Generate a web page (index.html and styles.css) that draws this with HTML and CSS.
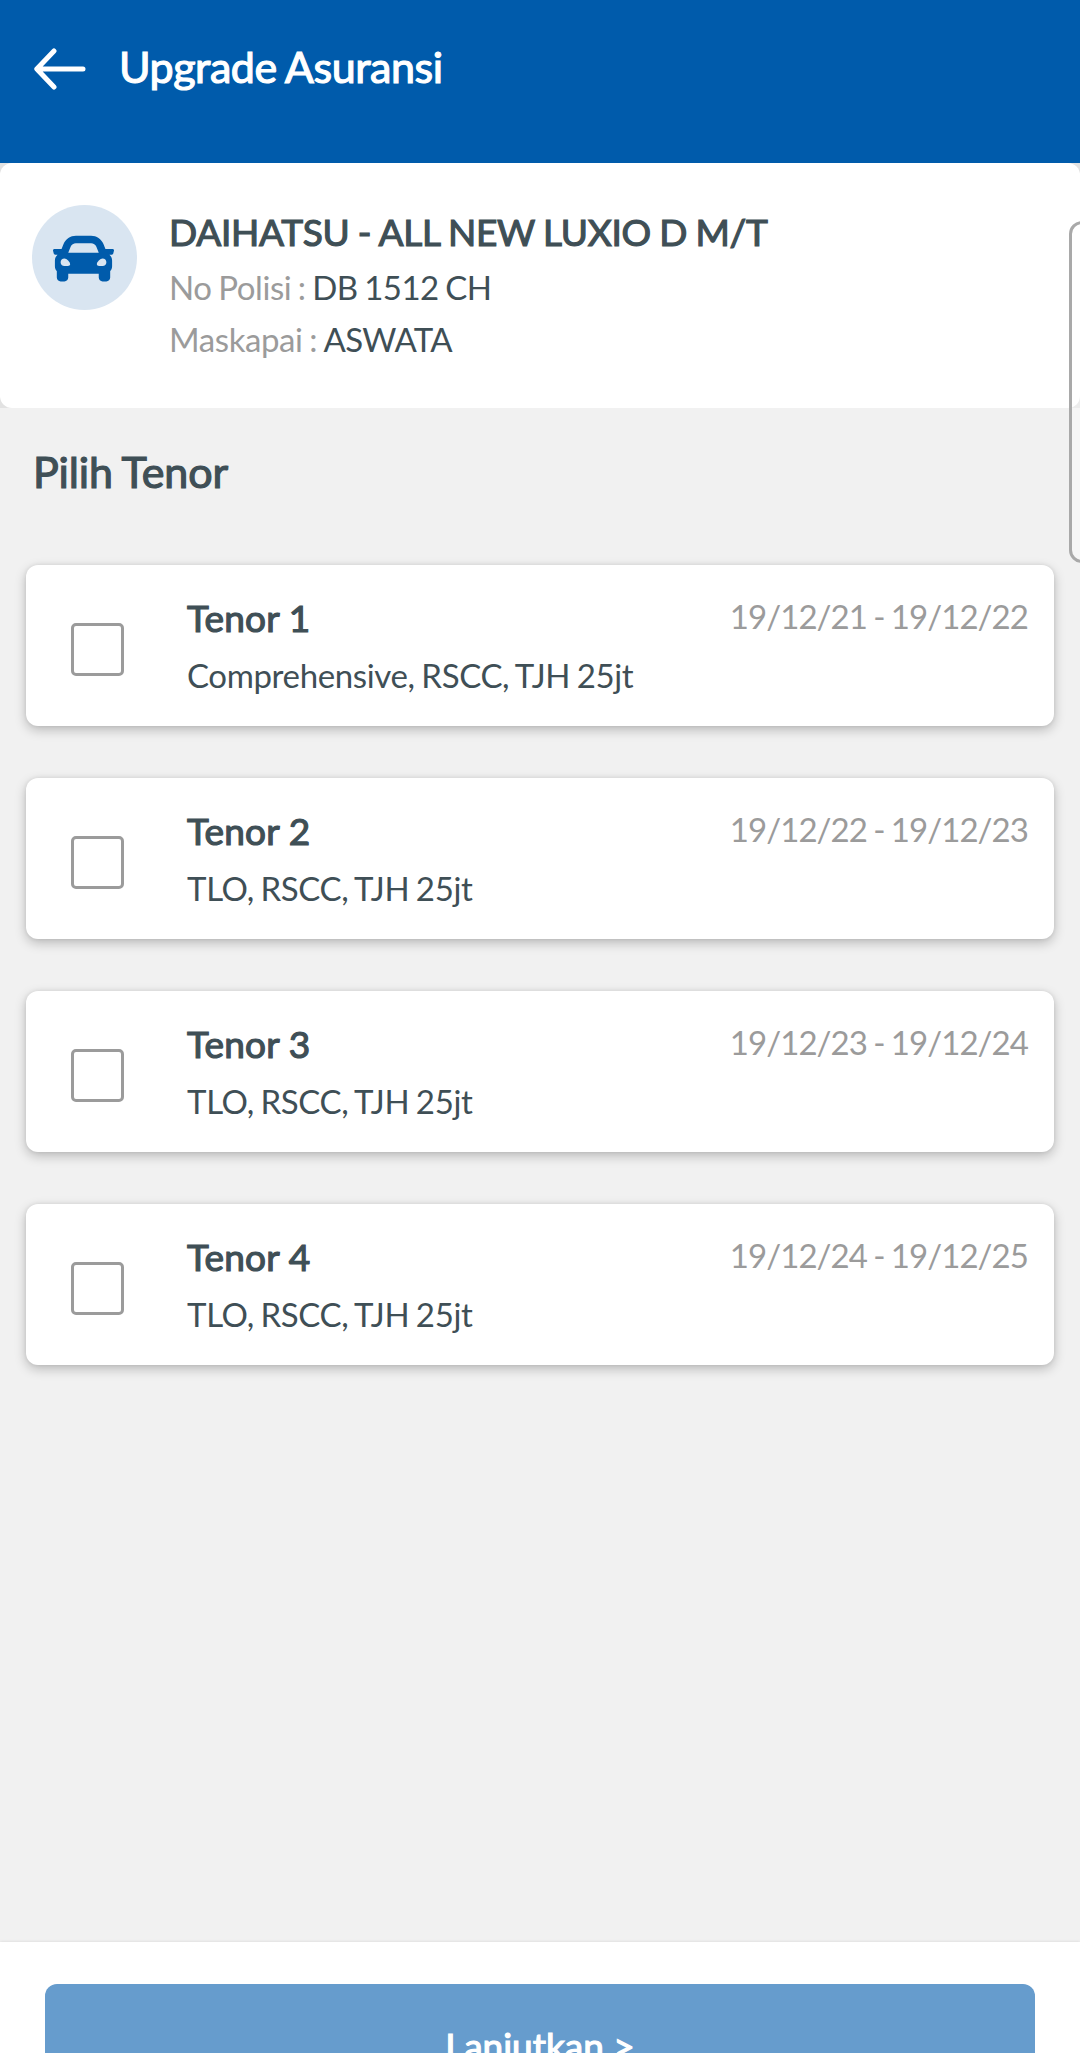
FILE: index.html
```html
<!DOCTYPE html>
<html lang="id">
<head>
<meta charset="utf-8">
<title>Upgrade Asuransi</title>
<link rel="stylesheet" href="styles.css">
</head>
<body>
<div class="screen">
  <header class="topbar">
    <svg class="back" width="52" height="42" viewBox="0 0 52 42"><path d="M49 21H3M20 3 2.8 21 20 39" fill="none" stroke="#fff" stroke-width="5" stroke-linecap="round" stroke-linejoin="round"/></svg>
    <h1 class="title strong">Upgrade Asuransi</h1>
  </header>
  <div class="vehicle-wrap">
    <section class="vehicle">
      <div class="avatar">
        <svg width="61" height="61" viewBox="0 0 512 512"><path fill="#005bab" d="M499.99 176h-59.87l-16.64-41.6C406.38 91.63 365.57 64 319.5 64h-127c-46.06 0-86.88 27.63-103.99 70.4L71.87 176H12.01C4.2 176-1.53 183.34.37 190.91l6 24C7.7 220.25 12.5 224 18.01 224h20.07C24.65 235.73 16 252.78 16 272v48c0 16.12 6.16 30.67 16 41.93V416c0 17.67 14.33 32 32 32h32c17.67 0 32-14.33 32-32v-32h256v32c0 17.67 14.33 32 32 32h32c17.67 0 32-14.33 32-32v-54.07c9.84-11.25 16-25.8 16-41.93v-48c0-19.22-8.65-36.27-22.07-48H494c5.51 0 10.31-3.75 11.64-9.09l6-24c1.89-7.57-3.84-14.91-11.65-14.91zm-352.06-17.83c7.29-18.22 24.94-30.17 44.57-30.17h127c19.63 0 37.28 11.95 44.57 30.17L384 208H128l19.93-49.83zM96 319.8c-19.2 0-32-12.76-32-31.9S76.8 256 96 256s48 28.71 48 47.85-28.8 15.95-48 15.95zm320 0c-19.2 0-48 3.19-48-15.95S396.8 256 416 256s32 12.76 32 31.9-12.8 31.9-32 31.9z"/></svg>
      </div>
      <div class="vehicle-info">
        <h2 class="name strong">DAIHATSU - ALL NEW LUXIO D M/T</h2>
        <p class="line"><span class="muted">No Polisi : </span>DB 1512 CH</p>
        <p class="line"><span class="muted">Maskapai : </span><span class="insurer">ASWATA</span></p>
      </div>
    </section>
  </div>
  <main class="content">
    <h2 class="heading strong">Pilih Tenor</h2>
    <div class="list">
      <article class="card">
        <span class="check"></span>
        <div class="tenor"><h3 class="tenor-name strong">Tenor 1</h3><p class="cover">Comprehensive, RSCC, TJH 25jt</p></div>
        <span class="date">19/12/21 - 19/12/22</span>
      </article>
      <article class="card">
        <span class="check"></span>
        <div class="tenor"><h3 class="tenor-name strong">Tenor 2</h3><p class="cover">TLO, RSCC, TJH 25jt</p></div>
        <span class="date">19/12/22 - 19/12/23</span>
      </article>
      <article class="card">
        <span class="check"></span>
        <div class="tenor"><h3 class="tenor-name strong">Tenor 3</h3><p class="cover">TLO, RSCC, TJH 25jt</p></div>
        <span class="date">19/12/23 - 19/12/24</span>
      </article>
      <article class="card">
        <span class="check"></span>
        <div class="tenor"><h3 class="tenor-name strong">Tenor 4</h3><p class="cover">TLO, RSCC, TJH 25jt</p></div>
        <span class="date">19/12/24 - 19/12/25</span>
      </article>
    </div>
  </main>
  <footer class="footer"><div class="next strong">Lanjutkan &gt;</div></footer>
  <div class="edge-panel"></div>
</div>
</body>
</html>
```
FILE: styles.css
```css
* { box-sizing: border-box; }
body { margin: 0; background: #f1f1f1; font-family: Lato, sans-serif; color: #3f4f56; }
h1, h2, h3, p { margin: 0; font-weight: 400; white-space: nowrap; }

.screen { position: relative; width: 1080px; height: 2053px; overflow: hidden; display: flex; flex-direction: column; }
.strong { -webkit-text-stroke: 1.2px currentColor; font-kerning: normal; font-variant-ligatures: none; }

.topbar { height: 163px; background: #005bab; color: #fff; display: flex; align-items: flex-start; padding: 48px 34px 0; gap: 33px; }
.back { flex: none; }
.title { font-size: 43px; line-height: 38px; letter-spacing: -.45px; word-spacing: -1px; }

.vehicle-wrap { background: #e2e2e2; height: 245px; }
.vehicle { height: 245px; background: #fff; border-radius: 12px; padding: 42px 32px 0; display: flex; gap: 32px; }
.avatar { width: 105px; height: 105px; border-radius: 50%; background: #d9e5f1; display: flex; align-items: center; justify-content: center; padding-right: 3px; padding-top: 1px; }
.vehicle-info { padding-top: 3px; }
.name { font-size: 37px; line-height: 48px; letter-spacing: -.25px; word-spacing: -.9px; }
.line { font-size: 33px; line-height: 52px; letter-spacing: -.5px; word-spacing: -1.5px; }
.name + .line { margin-top: 5px; }
.muted { letter-spacing: -.4px; color: #9b9b9b; }
.insurer { letter-spacing: -.7px; }

.content { flex: 1; padding: 38px 26px 0; }
.heading { font-size: 43px; line-height: 52px; padding-left: 7px; letter-spacing: -.1px; word-spacing: -1px; }
.list { margin-top: 67px; display: flex; flex-direction: column; gap: 52px; }
.card { height: 161px; border-radius: 12px; background: #fff; display: flex; align-items: flex-start; padding: 0 26px 0 45px; box-shadow: 0 4px 12px rgba(0, 0, 0, .23), 0 0 4px rgba(0, 0, 0, .08); }
.check { flex: none; width: 53px; height: 53px; margin-top: 58px; border: 3px solid #9b9b9b; border-radius: 5px; }
.tenor { margin-left: 63px; padding-top: 25px; }
.tenor-name { font-size: 37px; line-height: 56px; letter-spacing: .2px; }
.cover { margin-top: 1px; font-size: 33px; line-height: 56px; letter-spacing: -.36px; word-spacing: -1.5px; }
.date { margin-left: auto; padding-top: 31px; font-size: 33px; line-height: 40px; letter-spacing: -.93px; word-spacing: -1.3px; color: #9b9b9b; white-space: nowrap; }

.footer { height: 111px; background: #fff; padding: 42px 45px 0; box-shadow: 0 0 3px rgba(0, 0, 0, .12); }
.next { height: 126px; border-radius: 12px; background: #669ccd; color: #fff; font-size: 37px; line-height: 124px; text-align: center; }

.edge-panel { position: absolute; left: 1069px; top: 221px; width: 40px; height: 342px; border: 3px solid #a9a9a9; border-radius: 13px; background: rgba(255, 255, 255, .35); }
```
